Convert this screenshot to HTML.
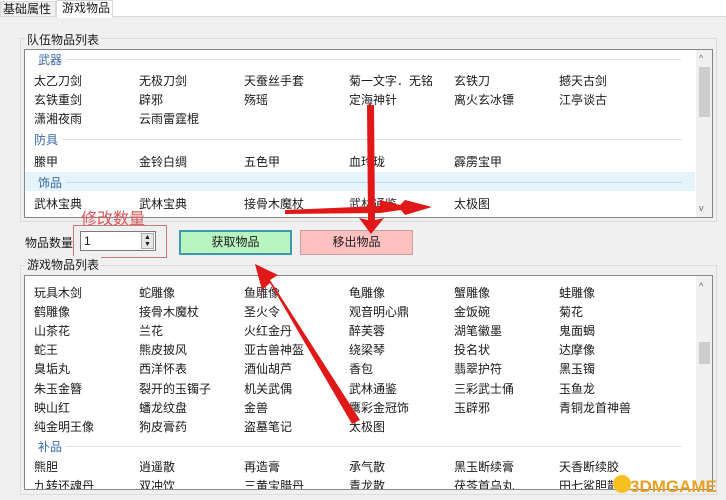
<!DOCTYPE html>
<html><head><meta charset="utf-8"><style>
*{margin:0;padding:0;box-sizing:border-box}
body{width:726px;height:500px;overflow:hidden;background:#f0f0f0;font-family:"Liberation Sans","Noto Sans CJK SC",sans-serif;font-size:12px;color:#1a1a1a;position:relative}
.a{position:absolute;white-space:nowrap}
.box{position:absolute;background:#fff;border:1px solid #828790}
.hd{position:absolute;color:#3a68a8;font-size:12px}
.ln{position:absolute;height:1px;background:#dde3ea}
.sb{position:absolute;background:#f0f0f0;width:16px}
</style></head><body>
<div class="a" style="left:0;top:0;width:726px;height:17px;border-bottom:1px solid #d9d9d9;background:#fff"></div>
<div class="a" style="left:0;top:1px;width:56px;height:16px;background:#f0f0f0;border:1px solid #d9d9d9;padding-left:2px;line-height:14px">基础属性</div>
<div class="a" style="left:56px;top:0;width:57px;height:18px;background:#fff;border:1px solid #d9d9d9;border-bottom:none;padding-left:5px;line-height:15px">游戏物品</div>

<div class="a" style="left:20px;top:38px;width:697px;height:184px;border:1px solid #dcdcdc"></div>
<div class="a" style="left:25px;top:31px;background:#f0f0f0;padding:0 2px">队伍物品列表</div>
<div class="box" style="left:24px;top:49px;width:689px;height:169px"></div>
<div class="a" style="left:25px;top:172px;width:670px;height:19px;background:#e5f3fb"></div>
<div class="sb" style="left:696px;top:50px;height:167px"></div>
<div class="a" style="left:699px;top:67px;width:11px;height:50px;background:#cdcdcd"></div>
<div class="a" style="left:699px;top:53px;font-size:9px;color:#666">^</div>
<div class="a" style="left:699px;top:203px;font-size:9px;color:#666">v</div>

<div class="hd" style="left:38px;top:51px">武器</div><div class="ln" style="left:66px;top:59px;width:255px"></div><div class="ln" style="left:321px;top:59px;width:360px"></div>
<div class="hd" style="left:34px;top:131px">防具</div><div class="ln" style="left:62px;top:139px;width:620px"></div>
<div class="hd" style="left:38px;top:174px">饰品</div><div class="ln" style="left:66px;top:182px;width:616px;background:#c9d6e3"></div>

<div class="a" style="left:34px;top:72px">太乙刀剑</div><div class="a" style="left:139px;top:72px">无极刀剑</div><div class="a" style="left:244px;top:72px">天蚕丝手套</div><div class="a" style="left:349px;top:72px">菊一文字．无铭</div><div class="a" style="left:454px;top:72px">玄铁刀</div><div class="a" style="left:559px;top:72px">撼天古剑</div>
<div class="a" style="left:34px;top:91px">玄铁重剑</div><div class="a" style="left:139px;top:91px">辟邪</div><div class="a" style="left:244px;top:91px">殇瑶</div><div class="a" style="left:349px;top:91px">定海神针</div><div class="a" style="left:454px;top:91px">离火玄冰镖</div><div class="a" style="left:559px;top:91px">江亭谈古</div>
<div class="a" style="left:34px;top:110px">潇湘夜雨</div><div class="a" style="left:139px;top:110px">云雨雷霆棍</div>
<div class="a" style="left:34px;top:153px">縢甲</div><div class="a" style="left:139px;top:153px">金铃白绸</div><div class="a" style="left:244px;top:153px">五色甲</div><div class="a" style="left:349px;top:153px">血玲珑</div><div class="a" style="left:454px;top:153px">霹雳宝甲</div>
<div class="a" style="left:34px;top:195px">武林宝典</div><div class="a" style="left:139px;top:195px">武林宝典</div><div class="a" style="left:244px;top:195px">接骨木魔杖</div><div class="a" style="left:349px;top:195px">武林通鉴</div><div class="a" style="left:454px;top:195px">太极图</div>

<div class="a" style="left:25px;top:234px">物品数量</div>
<div class="a" style="left:73px;top:225px;width:94px;height:33px;border:1px solid #c87878"></div>
<div class="a" style="left:81px;top:205px;color:#d85a5a;font-size:16px">修改数量</div>
<div class="a" style="left:80px;top:231px;width:76px;height:20px;background:#fff;border:1px solid #7a7a7a;padding-left:3px;line-height:18px">1</div>
<div class="a" style="left:141px;top:233px;width:13px;height:16px;background:#e8e8e8;border:1px solid #aaa;font-size:7px;line-height:7px;text-align:center">▲<br>▼</div>
<div class="a" style="left:179px;top:230px;width:113px;height:25px;background:#b8f5c0;border:2px solid #3a9ab0;text-align:center;line-height:21px">获取物品</div>
<div class="a" style="left:300px;top:230px;width:113px;height:25px;background:#ffc0c0;border:1px solid #c8a0a0;text-align:center;line-height:23px">移出物品</div>

<div class="a" style="left:20px;top:265px;width:697px;height:230px;border:1px solid #dcdcdc"></div>
<div class="a" style="left:25px;top:256px;background:#f0f0f0;padding:0 2px">游戏物品列表</div>
<div class="box" style="left:24px;top:275px;width:689px;height:215px"></div>
<div class="sb" style="left:696px;top:276px;height:213px"></div>
<div class="a" style="left:699px;top:342px;width:11px;height:22px;background:#cdcdcd"></div>
<div class="a" style="left:699px;top:281px;font-size:9px;color:#666">^</div>

<div class="a" style="left:34px;top:284px">玩具木剑</div><div class="a" style="left:139px;top:284px">蛇雕像</div><div class="a" style="left:244px;top:284px">鱼雕像</div><div class="a" style="left:349px;top:284px">龟雕像</div><div class="a" style="left:454px;top:284px">蟹雕像</div><div class="a" style="left:559px;top:284px">蛙雕像</div>
<div class="a" style="left:34px;top:303px">鹤雕像</div><div class="a" style="left:139px;top:303px">接骨木魔杖</div><div class="a" style="left:244px;top:303px">圣火令</div><div class="a" style="left:349px;top:303px">观音明心鼎</div><div class="a" style="left:454px;top:303px">金饭碗</div><div class="a" style="left:559px;top:303px">菊花</div>
<div class="a" style="left:34px;top:322px">山茶花</div><div class="a" style="left:139px;top:322px">兰花</div><div class="a" style="left:244px;top:322px">火红金丹</div><div class="a" style="left:349px;top:322px">醉芙蓉</div><div class="a" style="left:454px;top:322px">湖笔徽墨</div><div class="a" style="left:559px;top:322px">鬼面蝎</div>
<div class="a" style="left:34px;top:341px">蛇王</div><div class="a" style="left:139px;top:341px">熊皮披风</div><div class="a" style="left:244px;top:341px">亚古兽神盔</div><div class="a" style="left:349px;top:341px">绕梁琴</div><div class="a" style="left:454px;top:341px">投名状</div><div class="a" style="left:559px;top:341px">达摩像</div>
<div class="a" style="left:34px;top:360px">臭垢丸</div><div class="a" style="left:139px;top:360px">西洋怀表</div><div class="a" style="left:244px;top:360px">酒仙胡芦</div><div class="a" style="left:349px;top:360px">香包</div><div class="a" style="left:454px;top:360px">翡翠护符</div><div class="a" style="left:559px;top:360px">黑玉镯</div>
<div class="a" style="left:34px;top:380px">朱玉金簪</div><div class="a" style="left:139px;top:380px">裂开的玉镯子</div><div class="a" style="left:244px;top:380px">机关武偶</div><div class="a" style="left:349px;top:380px">武林通鉴</div><div class="a" style="left:454px;top:380px">三彩武士俑</div><div class="a" style="left:559px;top:380px">玉鱼龙</div>
<div class="a" style="left:34px;top:399px">映山红</div><div class="a" style="left:139px;top:399px">蟠龙纹盘</div><div class="a" style="left:244px;top:399px">金兽</div><div class="a" style="left:349px;top:399px">鹰彩金冠饰</div><div class="a" style="left:454px;top:399px">玉辟邪</div><div class="a" style="left:559px;top:399px">青铜龙首神兽</div>
<div class="a" style="left:34px;top:418px">纯金明王像</div><div class="a" style="left:139px;top:418px">狗皮膏药</div><div class="a" style="left:244px;top:418px">盗墓笔记</div><div class="a" style="left:349px;top:418px">太极图</div>
<div class="hd" style="left:38px;top:438px">补品</div><div class="ln" style="left:66px;top:446px;width:616px"></div>
<div class="a" style="left:34px;top:458px">熊胆</div><div class="a" style="left:139px;top:458px">逍遥散</div><div class="a" style="left:244px;top:458px">再造膏</div><div class="a" style="left:349px;top:458px">承气散</div><div class="a" style="left:454px;top:458px">黑玉断续膏</div><div class="a" style="left:559px;top:458px">天香断续胶</div>
<div class="a" style="left:25px;top:477px;width:670px;height:12px;overflow:hidden"><div class="a" style="left:9px;top:0">九转还魂丹</div><div class="a" style="left:114px;top:0">双冲饮</div><div class="a" style="left:219px;top:0">三黄宝腊丹</div><div class="a" style="left:324px;top:0">青龙散</div><div class="a" style="left:429px;top:0">茯苓首乌丸</div><div class="a" style="left:534px;top:0">田七鲨胆散</div></div>

<svg class="a" style="left:0;top:0" width="726" height="500">
<g fill="#e01818">
<polygon points="367,105 374,105 375,220 384,218 371,234 359,218 368,220"/>
<polygon points="285,210 380,206 380,200 400,205 405,200 432,207 405,215 401,210 380,213 285,214"/>
<polygon points="360,420 352,424 270,283 262,290 255,264 278,275 270,280"/>
</g>
<text x="630" y="492" font-family="Liberation Sans" font-weight="bold" font-size="17" fill="#e8a020">3DMGAME</text>
<circle cx="622" cy="484" r="9" fill="#f5c020"/>
</svg>
</body></html>
